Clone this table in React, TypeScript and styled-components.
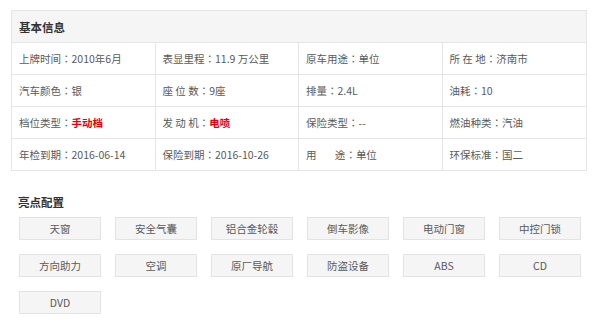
import React from "react";
import styled, { createGlobalStyle } from "styled-components";

const Global = createGlobalStyle`
  html, body { margin: 0; padding: 0; background: #fff; }
  body { font-family: "Microsoft YaHei", "Noto Sans CJK SC", "Noto Sans", sans-serif; color: #555; }
`;

const Page = styled.div`
  padding: 10px 13px 0 11px;
  width: 600px;
  box-sizing: border-box;
`;

const Table = styled.div`
  border: 1px solid #e6e6e6;
  display: grid;
  grid-template-columns: repeat(4, 1fr);
`;

const Head = styled.div`
  grid-column: 1 / -1;
  height: 31px;
  background: #f5f5f5;
  border-bottom: 1px solid #e6e6e6;
  display: flex;
  align-items: center;
  padding-left: 7px;
  font-size: 11.5px;
  font-weight: bold;
  color: #333;
`;

const Cell = styled.div<{ $last?: boolean; $bottom?: boolean }>`
  height: 31px;
  display: flex;
  align-items: center;
  padding-left: 7px;
  font-size: 10.5px;
  color: #5a5a5a;
  white-space: pre;
  border-right: ${(p) => (p.$last ? "none" : "1px solid #e6e6e6")};
  border-bottom: ${(p) => (p.$bottom ? "none" : "1px solid #e6e6e6")};
`;

/* full-width colon, centred in its box */
const Colon = styled.span`
  font-family: "Noto Sans CJK TC", "Noto Sans CJK SC", sans-serif;
`;

const Hot = styled.b`
  color: #e4000f;
  font-weight: bold;
`;

const Title = styled.div`
  margin: 23px 0 0 7px;
  font-size: 11.5px;
  font-weight: bold;
  color: #333;
  line-height: 17px;
`;

const Tags = styled.div`
  display: flex;
  flex-wrap: wrap;
  column-gap: 14px;
  row-gap: 14px;
  margin: 6px 0 0 8px;
  width: 580px;
`;

const Tag = styled.div`
  width: 80px;
  height: 21px;
  border: 1px solid #e3e3e3;
  background: #f5f5f5;
  display: flex;
  align-items: center;
  justify-content: center;
  font-size: 10.5px;
  color: #5a5a5a;
`;

type Item = { label: string; value: React.ReactNode; gap?: boolean };

const rows: Item[][] = [
  [
    { label: "上牌时间", value: "2010年6月" },
    { label: "表显里程", value: "11.9 万公里" },
    { label: "原车用途", value: "单位" },
    { label: "所 在 地", value: "济南市" },
  ],
  [
    { label: "汽车颜色", value: "银" },
    { label: "座 位 数", value: "9座" },
    { label: "排量", value: "2.4L" },
    { label: "油耗", value: "10" },
  ],
  [
    { label: "档位类型", value: <Hot>手动档</Hot>, gap: true },
    { label: "发 动 机", value: <Hot>电喷</Hot> },
    { label: "保险类型", value: "--" },
    { label: "燃油种类", value: "汽油" },
  ],
  [
    { label: "年检到期", value: "2016-06-14" },
    { label: "保险到期", value: "2016-10-26" },
    { label: "用\u3000\u2002\u2005途", value: "单位" },
    { label: "环保标准", value: "国二" },
  ],
];

const features = [
  "天窗", "安全气囊", "铝合金轮毂", "倒车影像", "电动门窗", "中控门锁",
  "方向助力", "空调", "原厂导航", "防盗设备", "ABS", "CD", "DVD",
];

export default function App() {
  return (
    <Page>
      <Global />
      <Table>
        <Head>基本信息</Head>
        {rows.map((row, r) =>
          row.map((it, c) => (
            <Cell key={`${r}-${c}`} $last={c === 3} $bottom={r === rows.length - 1}>
              {it.label}
              <Colon>：</Colon>
              {it.gap ? " " : ""}
              {it.value}
            </Cell>
          ))
        )}
      </Table>
      <Title>亮点配置</Title>
      <Tags>
        {features.map((f) => (
          <Tag key={f}>{f}</Tag>
        ))}
      </Tags>
    </Page>
  );
}
